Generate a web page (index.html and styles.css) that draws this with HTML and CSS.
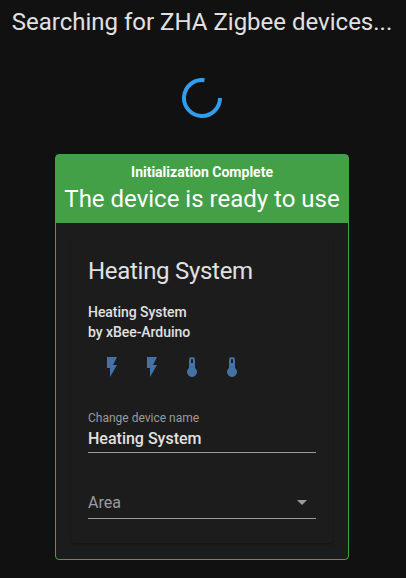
FILE: index.html
```html
<!DOCTYPE html>
<html lang="en">
<head>
<meta charset="utf-8">
<title>Add Zigbee device</title>
<link rel="stylesheet" href="styles.css">
</head>
<body>
<main class="page">
  <h1 class="title">Searching for ZHA Zigbee devices...</h1>
  <svg class="spinner" viewBox="0 0 40 40"><path d="M38 20A18 18 0 1 1 22.5 2.17"/></svg>
  <section class="device">
    <header class="status">
      <div class="status-small">Initialization Complete</div>
      <div class="status-large">The device is ready to use</div>
    </header>
    <div class="card">
      <h2 class="name">Heating System</h2>
      <div class="model">Heating System<br>by xBee-Arduino</div>
      <div class="icons">
        <svg viewBox="0 0 24 24"><path d="M7 2V13H10V22L17 10H13L17 2Z"/></svg>
        <svg viewBox="0 0 24 24"><path d="M7 2V13H10V22L17 10H13L17 2Z"/></svg>
        <svg viewBox="0 0 24 24"><path d="M15 13V5A3 3 0 0 0 9 5V13A5 5 0 1 0 15 13M12 4A1 1 0 0 1 13 5V8H11V5A1 1 0 0 1 12 4Z"/></svg>
        <svg viewBox="0 0 24 24"><path d="M15 13V5A3 3 0 0 0 9 5V13A5 5 0 1 0 15 13M12 4A1 1 0 0 1 13 5V8H11V5A1 1 0 0 1 12 4Z"/></svg>
      </div>
      <div class="field">
        <div class="label">Change device name</div>
        <div class="value">Heating System</div>
      </div>
      <div class="field area">
        <span>Area</span>
        <svg class="arrow" viewBox="0 0 10 5"><path d="M0 0H10L5 5Z"/></svg>
      </div>
    </div>
  </section>
</main>
</body>
</html>
```
FILE: styles.css
```css
* { box-sizing: border-box; }
body {
  margin: 0;
  background: #111;
  color: #e1e1e1;
  font-family: Roboto, sans-serif;
}
.page {
  display: flex;
  flex-direction: column;
  align-items: center;
  width: 404px;
  height: 578px;
}
.title {
  margin: 6px 0 0;
  font-size: 24px;
  font-weight: 400;
  line-height: 32px;
  white-space: nowrap;
}
.spinner {
  width: 40px;
  height: 40px;
  margin-top: 40px;
  fill: none;
  stroke: #319ded;
  stroke-width: 4;
}
.device {
  width: 294px;
  height: 406px;
  margin-top: 36px;
  border: 1px solid #43a047;
  border-radius: 4px;
  background: #1c1c1c;
}
.status {
  height: 68px;
  padding-top: 7px;
  background: #43a047;
  color: #fff;
  text-align: center;
  white-space: nowrap;
}
.status-small {
  font-size: 14px;
  font-weight: 700;
  line-height: 20px;
}
.status-large {
  font-size: 24px;
  line-height: 34px;
}
.card {
  height: 305px;
  margin: 15px;
  padding: 17px 17px 0;
  border-radius: 4px;
  box-shadow: 0 1px 2px rgba(0, 0, 0, 0.3);
}
.name {
  margin: 0;
  font-size: 24px;
  font-weight: 400;
  line-height: 32px;
  letter-spacing: -0.012em;
}
.model {
  margin-top: 15px;
  font-size: 14px;
  font-weight: 500;
  line-height: 20px;
  letter-spacing: -0.05px;
}
.icons {
  display: flex;
  gap: 16px;
  margin: 13px 0 0 12px;
}
.icons svg {
  width: 24px;
  height: 24px;
  fill: #4472a4;
}
.field {
  height: 43px;
  margin-top: 31px;
  border-bottom: 1px solid #9b9b9b;
}
.label {
  color: #9b9b9b;
  font-size: 12px;
  line-height: 16px;
}
.value {
  padding-top: 1px;
  font-size: 16px;
  font-weight: 500;
  line-height: 24px;
}
.area {
  display: flex;
  justify-content: space-between;
  align-items: center;
  height: 34px;
  margin-top: 32px;
  padding: 2px 9px 0 0;
  color: #9b9b9b;
  font-size: 16px;
}
.arrow {
  width: 10px;
  height: 5px;
  fill: #9b9b9b;
}
```
